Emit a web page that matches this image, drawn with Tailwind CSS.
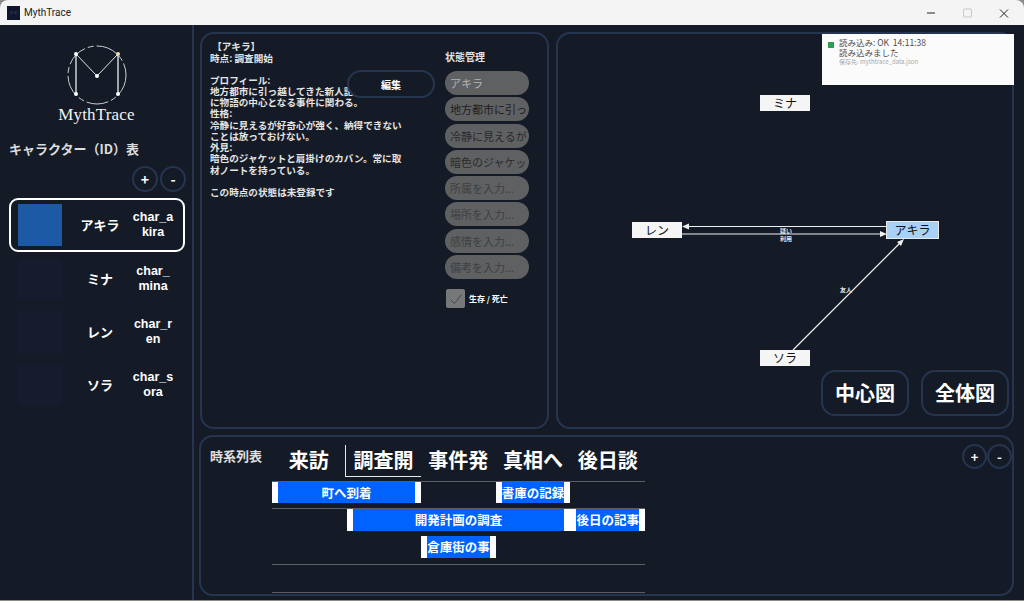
<!DOCTYPE html>
<html lang="ja">
<head>
<meta charset="UTF-8">
<title>MythTrace</title>
<script src="https://cdn.jsdelivr.net/npm/@tailwindcss/browser@4"></script>
</head>
<body class="bg-[#8a8a86] overflow-hidden font-['Noto_Sans_CJK_JP','Liberation_Sans',sans-serif]">
<div class="w-[1024px] h-[600px] flex flex-col rounded-t-lg overflow-hidden">
  <!-- title bar -->
  <div class="h-[25px] shrink-0 bg-[#f4f4f4] flex items-center pl-[7px] text-[#222]">
    <svg class="w-[13px] h-[14px] bg-[#10162e]" viewBox="0 0 13 14" fill="none"><path d="M4 9V5L6.5 7.5L9 5V9" stroke="#3a4460" stroke-width="0.6"/></svg>
    <span class="ml-[4px] text-[10px] font-['Roboto',sans-serif]">MythTrace</span>
    <div class="ml-auto flex items-center">
      <svg class="w-[92px] h-[24px]" viewBox="0 0 92 24" fill="none">
        <path d="M0 12h8" stroke="#222" stroke-width="1"/>
        <rect x="36.5" y="8" width="8" height="8" rx="1" stroke="#c8c8c8"/>
        <path d="M73 8.5l8 8M81 8.5l-8 8" stroke="#222" stroke-width="1"/>
      </svg>
      <div class="w-[5px]"></div>
    </div>
  </div>

  <div class="flex-1 flex bg-[#151b26] min-h-0">
    <!-- sidebar -->
    <aside class="w-[194px] shrink-0 border-r-2 border-[#25354f] flex flex-col">
      <div class="h-[105px] relative">
        <svg class="absolute left-[60px] top-[14px] w-[72px] h-[72px]" viewBox="0 0 72 72" fill="none">
          <circle cx="37" cy="36" r="29" stroke="#c9ccd2" stroke-width="1" stroke-dasharray="22 3 6 3"/>
          <path d="M16 15V55M58 15V55" stroke="#fff" stroke-width="1.2"/>
          <path d="M16 15L37 37L58 15" stroke="#e6e6e6" stroke-width="1"/>
          <circle cx="16" cy="15" r="2" fill="#fff"/>
          <circle cx="58" cy="15" r="2" fill="#ecdcb4"/>
          <circle cx="37" cy="37" r="2" fill="#fff"/>
          <circle cx="16" cy="55" r="2" fill="#fff"/>
          <circle cx="58" cy="55" r="2" fill="#fff"/>
        </svg>
        <div class="absolute left-0 w-[193px] top-[80px] text-center text-[#f2f2f2] text-[17px] leading-5 tracking-[0.2px] font-['Liberation_Serif',serif]">MythTrace</div>
      </div>
      <h2 class="mt-[9px] ml-[9px] text-[13px] leading-5 font-bold text-[#dcdcdc] whitespace-nowrap">キャラクター（ID）表</h2>
      <div class="mt-[7px] pr-[6px] flex justify-end gap-[2px]">
        <button class="w-[26px] h-[26px] rounded-full border-2 border-[#25354f] text-white font-bold text-[14px] leading-none">+</button>
        <button class="w-[26px] h-[26px] rounded-full border-2 border-[#25354f] text-white font-bold text-[14px] leading-none">-</button>
      </div>
      <ul class="mt-[6px] ml-[9px] mr-[7px] flex flex-col text-white">
        <li class="h-[54px] flex items-center border-2 border-white rounded-[9px] pl-[7px]">
          <div class="w-[44px] h-[42px] bg-[#1d5aa6]"></div>
          <span class="w-[64px] text-center text-[13px] font-bold pl-[12px]">アキラ</span>
          <span class="w-[44px] ml-[5px] text-center text-[12.5px] leading-[15px] font-bold break-all font-['Liberation_Sans',sans-serif]">char_akira</span>
        </li>
        <li class="h-[53px] flex items-center pl-[9px]">
          <div class="w-[44px] h-[42px] bg-[#161c2d]"></div>
          <span class="w-[64px] text-center text-[13px] font-bold pl-[12px]">ミナ</span>
          <span class="w-[44px] ml-[5px] text-center text-[12.5px] leading-[15px] font-bold break-all font-['Liberation_Sans',sans-serif]">char_mina</span>
        </li>
        <li class="h-[53px] flex items-center pl-[9px]">
          <div class="w-[44px] h-[42px] bg-[#161c2d]"></div>
          <span class="w-[64px] text-center text-[13px] font-bold pl-[12px]">レン</span>
          <span class="w-[44px] ml-[5px] text-center text-[12.5px] leading-[15px] font-bold break-all font-['Liberation_Sans',sans-serif]">char_ren</span>
        </li>
        <li class="h-[53px] flex items-center pl-[9px]">
          <div class="w-[44px] h-[42px] bg-[#161c2d]"></div>
          <span class="w-[64px] text-center text-[13px] font-bold pl-[12px]">ソラ</span>
          <span class="w-[44px] ml-[5px] text-center text-[12.5px] leading-[15px] font-bold break-all font-['Liberation_Sans',sans-serif]">char_sora</span>
        </li>
      </ul>
    </aside>

    <!-- main -->
    <main class="flex-1 min-w-0 flex flex-col pt-[7px] pl-[6px] pr-[10px] gap-[6px]">
      <div class="flex gap-[7px] h-[397px]">
        <!-- details -->
        <section class="relative w-[349px] border-2 border-[#25354f] rounded-[14px] flex text-white">
          <div class="w-[234px] pl-[8px] pt-[7px] text-[9.6px] leading-[11.25px] font-bold text-[#e4e4e4]">
            <p>&nbsp;【アキラ】</p>
            <p class="mt-[1px]">時点: 調査開始</p>
            <p class="mt-[10px]">プロフィール:</p>
            <p>地方都市に引っ越してきた新人記者。やがて<br>に物語の中心となる事件に関わる。</p>
            <p>性格:</p>
            <p>冷静に見えるが好奇心が強く、納得できない<br>ことは放っておけない。</p>
            <p>外見:</p>
            <p>暗色のジャケットと肩掛けのカバン。常に取<br>材ノートを持っている。</p>
            <p class="mt-[11px]">この時点の状態は未登録です</p>
          </div>
          <div class="pl-[9px] pt-[15px] w-[100px]">
            <h3 class="text-[10px] leading-4 font-bold text-[#e4e4e4]">状態管理</h3>
            <div class="mt-[6px] flex flex-col gap-[2.3px] text-[11px]">
              <input class="w-[84px] h-[24px] rounded-[12px] bg-[#5f6062] pl-[5px] pr-[2px] text-[#b4b4b4] outline-none" value="アキラ">
              <input class="w-[84px] h-[24px] rounded-[12px] bg-[#5f6062] pl-[5px] pr-[2px] text-[#1d1d1f] outline-none" value="地方都市に引っ越してきた">
              <input class="w-[84px] h-[24px] rounded-[12px] bg-[#5f6062] pl-[5px] pr-[2px] text-[#2a2a2c] outline-none" value="冷静に見えるが好奇心">
              <input class="w-[84px] h-[24px] rounded-[12px] bg-[#5f6062] pl-[5px] pr-[2px] text-[#2a2a2c] outline-none" value="暗色のジャケットと肩">
              <input class="w-[84px] h-[24px] rounded-[12px] bg-[#5f6062] pl-[5px] pr-[2px] placeholder:text-[#3e3f41] outline-none" placeholder="所属を入力...">
              <input class="w-[84px] h-[24px] rounded-[12px] bg-[#5f6062] pl-[5px] pr-[2px] placeholder:text-[#3e3f41] outline-none" placeholder="場所を入力...">
              <input class="w-[84px] h-[24px] rounded-[12px] bg-[#5f6062] pl-[5px] pr-[2px] placeholder:text-[#3e3f41] outline-none" placeholder="感情を入力...">
              <input class="w-[84px] h-[24px] rounded-[12px] bg-[#5f6062] pl-[5px] pr-[2px] placeholder:text-[#3e3f41] outline-none" placeholder="備考を入力...">
            </div>
            <label class="mt-[10px] ml-[1px] flex items-center gap-[4px] text-[8px] font-bold">
              <span class="w-[19px] h-[19px] rounded-[2px] bg-[#77787a] flex items-center justify-center">
                <svg class="w-[14px] h-[14px]" viewBox="0 0 14 14" fill="none"><path d="M1.5 7.5L5.5 11.5L12.5 2.5" stroke="#3b3c3e" stroke-width="0.8"/></svg>
              </span>
              生存 / 死亡
            </label>
          </div>
          <button class="absolute left-[145px] top-[36px] w-[88px] h-[28px] rounded-[14px] border-2 border-[#25354f] bg-[#151b26] text-[10px] font-bold text-white">編集</button>
        </section>

        <!-- relation graph -->
        <section class="relative flex-1 border-2 border-[#25354f] rounded-[14px]">
          <svg class="absolute -left-[2px] -top-[2px] w-[458px] h-[397px]" viewBox="0 0 458 397" fill="none">
            <path d="M330 194.5H133" stroke="#f0f0f0" stroke-width="1.2"/>
            <path d="M126 194.5L133 191.5V197.5Z" fill="#f0f0f0"/>
            <path d="M126 202H324" stroke="#f0f0f0" stroke-width="1.2"/>
            <path d="M331 202L324 199V205Z" fill="#f0f0f0"/>
            <path d="M237 318L344 211" stroke="#f0f0f0" stroke-width="1.2"/>
            <path d="M348 207L345 214L341 210Z" fill="#f0f0f0"/>
          </svg>
          <span class="absolute left-[222px] top-[193px] text-[6px] leading-[8px] font-bold text-[#e8e8e8] text-center">疑い<br>利用</span>
          <span class="absolute left-[282px] top-[252px] text-[6px] leading-[8px] font-bold text-[#e8e8e8]">友人</span>
          <div class="absolute left-[202px] top-[61px] w-[50px] h-[16px] bg-[#f5f5f5] text-[#111] text-[12px] leading-[16px] text-center">ミナ</div>
          <div class="absolute left-[74px] top-[188px] w-[50px] h-[16px] bg-[#f5f5f5] text-[#111] text-[12px] leading-[16px] text-center">レン</div>
          <div class="absolute left-[328px] top-[187px] w-[53px] h-[18px] bg-[#a9d0f5] border border-[#e8e8e8] text-[#111] text-[12px] leading-[16px] text-center">アキラ</div>
          <div class="absolute left-[202px] top-[316px] w-[50px] h-[16px] bg-[#f5f5f5] text-[#111] text-[12px] leading-[16px] text-center">ソラ</div>
          <button class="absolute left-[263px] top-[336px] w-[88px] h-[46px] rounded-[14px] border-2 border-[#25354f] text-[20px] font-bold text-white">中心図</button>
          <button class="absolute left-[363px] top-[336px] w-[88px] h-[46px] rounded-[14px] border-2 border-[#25354f] text-[20px] font-bold text-white">全体図</button>
          <div class="absolute left-[264px] top-0 w-[192px] h-[51px] bg-[#fbfbfb] flex pl-[6px] pt-[4px] gap-[5px] text-[#4b4b4b]">
            <span class="mt-[4px] w-[6px] h-[6px] bg-[#2e9e50]"></span>
            <div class="text-[8.5px] leading-[9.5px]">
              <p class="whitespace-pre">読み込み: OK  14:11:38</p>
              <p>読み込みました</p>
              <p class="mt-[1px] text-[6px] leading-[8px] text-[#a8a8a8]">保存先: mythtrace_data.json</p>
            </div>
          </div>
        </section>
      </div>

      <!-- timeline -->
      <section class="relative h-[161px] border-2 border-[#25354f] rounded-[14px] -ml-[1px] flex text-white">
        <h3 class="w-[71px] shrink-0 pl-[9px] pt-[10px] text-[13px] leading-[17px] font-bold text-[#e0e0e0]">時系列表</h3>
        <div class="w-[373px] pt-[8px]">
          <div class="grid grid-cols-5 h-[36px] -ml-[0.5px] text-[20px] font-semibold text-center whitespace-nowrap">
            <div class="leading-[29px]">来訪</div>
            <div class="leading-[29px] h-[32px] -ml-[1px] border-l border-b border-[#e8e8e8]">調査開</div>
            <div class="leading-[29px]">事件発</div>
            <div class="leading-[29px]">真相へ</div>
            <div class="leading-[29px]">後日談</div>
          </div>
          <div class="grid grid-cols-5 h-[27px] border-t border-[#5a5d63] text-[12.5px] font-bold text-center leading-[21px]">
            <div class="col-start-1 col-span-2 h-[21px] w-[149px] border-x-[6px] border-white bg-[#0062ff] overflow-hidden whitespace-nowrap">町へ到着</div>
            <div class="col-start-4 h-[21px] border-x-[6px] border-white bg-[#0062ff] overflow-hidden whitespace-nowrap">書庫の記録</div>
          </div>
          <div class="grid grid-cols-5 h-[28px] border-t border-[#5a5d63] text-[12.5px] font-bold text-center leading-[22px]">
            <div class="col-start-2 col-span-3 h-[22px] border-x-[6px] border-white bg-[#0062ff] overflow-hidden whitespace-nowrap">開発計画の調査</div>
            <div class="col-start-5 h-[22px] border-x-[6px] border-white bg-[#0062ff] overflow-hidden whitespace-nowrap">後日の記事</div>
          </div>
          <div class="grid grid-cols-5 h-[28px] text-[12.5px] font-bold text-center leading-[22px]">
            <div class="col-start-3 h-[22px] border-x-[6px] border-white bg-[#0062ff] overflow-hidden whitespace-nowrap">倉庫街の事</div>
          </div>
          <div class="h-[29px] border-y border-y-[#5a5d63]"></div>
        </div>
        <div class="absolute right-0 top-[7px] flex">
          <button class="w-[25px] h-[25px] rounded-full border-2 border-[#25354f] font-bold text-[13px] leading-none">+</button>
          <button class="w-[25px] h-[25px] rounded-full border-2 border-[#25354f] font-bold text-[13px] leading-none">-</button>
        </div>
      </section>
    </main>
  </div>
</div>
</body>
</html>
